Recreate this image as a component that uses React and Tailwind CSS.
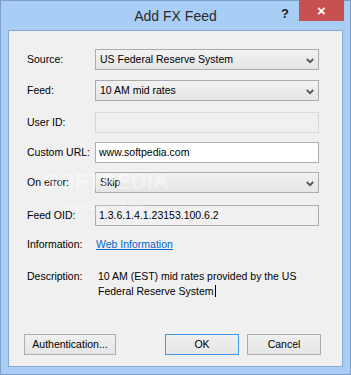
import React from 'react';

const font = { fontFamily: '"Liberation Sans", Arial, sans-serif' };

function Chevron() {
  return (
    <svg width="8" height="6" viewBox="0 0 8 6" className="absolute right-[4px] top-[8px]">
      <path d="M0.8 1 L4 4.2 L7.2 1" fill="none" stroke="#555" strokeWidth="1.8" />
    </svg>
  );
}

function Select({ value }) {
  return (
    <div className="relative h-[21px] w-[224px] border border-[#acacac] bg-gradient-to-b from-[#f2f2f2] to-[#e5e5e5] pl-[4px] leading-[19px]">
      {value}
      <Chevron />
    </div>
  );
}

function Row({ label, children, className }) {
  return (
    <div className={'flex h-[21px] items-center ' + className}>
      <div className="w-[68px] shrink-0">{label}</div>
      {children}
    </div>
  );
}

function Btn({ children, w, primary }) {
  return (
    <div
      className={
        'flex h-[21px] items-center justify-center bg-gradient-to-b from-[#f0f0f0] to-[#e5e5e5] border ' +
        (primary ? 'border-[#3c99f2]' : 'border-[#adadad]') + ' ' + w
      }
    >
      {children}
    </div>
  );
}

export default function App() {
  return (
    <div className="h-[375px] w-[351px] border border-[#7f9fc8] bg-[#a8cef6] text-[10.5px] text-black" style={font}>
      {/* title bar */}
      <div className="relative flex h-[29px] items-start justify-center">
        <span className="mt-[5px] text-[14px] text-[#2b2b2b]">Add FX Feed</span>
        <span className="absolute left-[280px] top-[3px] text-[13px] font-bold text-[#222]">?</span>
        <div className="absolute right-[6px] top-[-1px] flex h-[21px] w-[45px] items-center justify-center bg-[#c75050] text-[15px] font-bold leading-none text-white">
          ×
        </div>
      </div>

      {/* client area */}
      <div className="relative mx-[7px] h-[337px] border border-[#88a8d4] bg-[#f0f0f0] pl-[18px] pt-[18px]">
        <Row label="Source:">
          <Select value="US Federal Reserve System" />
        </Row>
        <Row label="Feed:" className="mt-[10px]">
          <Select value="10 AM mid rates" />
        </Row>
        <Row label="User ID:" className="mt-[11px]">
          <div className="h-[21px] w-[224px] border border-[#dadada] bg-[#f0f0f0]" />
        </Row>
        <Row label="Custom URL:" className="mt-[9px]">
          <div className="h-[21px] w-[224px] border border-[#abadb3] bg-white pl-[3px] leading-[19px]">www.softpedia.com</div>
        </Row>
        <Row label="On error:" className="mt-[9px]">
          <Select value="Skip" />
        </Row>
        <Row label="Feed OID:" className="mt-[12px]">
          <div className="h-[21px] w-[224px] border border-[#abadb3] bg-[#f0f0f0] pl-[3px] leading-[19px]">1.3.6.1.4.1.23153.100.6.2</div>
        </Row>
        <Row label="Information:" className="mt-[8px]">
          <span className="ml-[1px] text-[#0066cc] underline">Web Information</span>
        </Row>
        <div className="mt-[14px] flex leading-[14px]">
          <div className="w-[68px] shrink-0">Description:</div>
          <div className="ml-[3px] w-[210px]">
            10 AM (EST) mid rates provided by the US Federal Reserve System
            <span className="ml-[1px] inline-block h-[12px] w-px translate-y-[2px] bg-black" />
          </div>
        </div>

        <div className="mt-[36px] flex">
          <div className="-ml-[3px]">
            <Btn w="w-[92px]">Authentication...</Btn>
          </div>
          <div className="ml-[49px] flex gap-[8px]">
            <Btn w="w-[74px]" primary>OK</Btn>
            <Btn w="w-[74px]">Cancel</Btn>
          </div>
        </div>

        {/* watermark */}
        <div className="pointer-events-none absolute left-[34px] top-[140px] text-[22px] font-bold leading-none text-white opacity-40">
          SOFTPEDIA
        </div>
        <div className="pointer-events-none absolute left-[58px] top-[171px] text-[9px] leading-none text-white opacity-50">
          www.softpedia.com
        </div>
      </div>
    </div>
  );
}
